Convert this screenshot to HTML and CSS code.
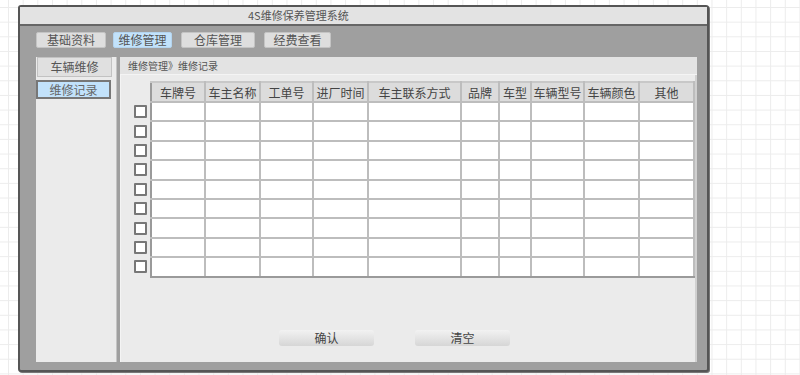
FILE: index.html
```html
<!DOCTYPE html>
<html lang="zh-CN">
<head>
  <meta charset="UTF-8" />
  <meta name="viewport" content="width=device-width, initial-scale=1.0" />
  <title>4S维修保养管理系统</title>
  <link rel="stylesheet" href="styles.css">
</head>
<body>
  <div class="frame">
    <div class="titlebar">4S维修保养管理系统</div>

    <div class="tabs">
      <button class="tab tab-base">基础资料</button>
      <button class="tab tab-repair active">维修管理</button>
      <button class="tab tab-store">仓库管理</button>
      <button class="tab tab-cost">经费查看</button>
    </div>

    <div class="main">
      <div class="sidebar">
        <div class="side-head">车辆维修</div>
        <div class="side-item active">维修记录</div>
      </div>

      <div class="content">
        <div class="crumb">维修管理》维修记录</div>
        <div class="panel">
          <table class="grid">
            <colgroup>
              <col style="width:17px">
              <col style="width:54px">
              <col style="width:55px">
              <col style="width:53px">
              <col style="width:55px">
              <col style="width:93px">
              <col style="width:38px">
              <col style="width:32px">
              <col style="width:53px">
              <col style="width:55px">
              <col style="width:55px">
            </colgroup>
            <thead>
              <tr>
                <th class="check"></th>
                <th>车牌号</th>
                <th>车主名称</th>
                <th>工单号</th>
                <th>进厂时间</th>
                <th>车主联系方式</th>
                <th>品牌</th>
                <th>车型</th>
                <th>车辆型号</th>
                <th>车辆颜色</th>
                <th>其他</th>
              </tr>
            </thead>
            <tbody id="rows"></tbody>
          </table>

          <div class="actions">
            <button class="btn">确认</button>
            <button class="btn">清空</button>
          </div>
        </div>
      </div>
    </div>
  </div>

  <script>
    let rows = document.getElementById("rows");
    for (let i = 0; i < 9; i++) {
      let tr = document.createElement("tr");
      tr.innerHTML = '<td class="check"><span class="box"></span></td>' + '<td></td>'.repeat(10);
      rows.appendChild(tr);
    }
  </script>
</body>
</html>
```

FILE: styles.css
```css
:root {
  --frame: #9f9f9f;
  --frame-border: #555555;
  --bar: #e3e3e3;
  --panel: #ebebeb;
  --text: #444444;
  --select: #c2e2fb;
  --line: #bdbdbd;
}

* {
  margin: 0;
  padding: 0;
  box-sizing: border-box;
  font-family: "Noto Sans CJK SC", "Noto Sans", sans-serif;
}

body {
  background-color: #ffffff;
  background-image:
    linear-gradient(to right, #ececec 1px, transparent 1px),
    linear-gradient(to bottom, #ececec 1px, transparent 1px);
  background-size: 14.67px 14.67px;
  background-position: 8px 7px;
  height: 100vh;
  color: var(--text);
  overflow: hidden;
}

.frame {
  margin: 5px 0 0 18px;
  width: 691px;
  height: 367px;
  border: 2px solid var(--frame-border);
  border-radius: 3px;
  background: var(--frame);
  box-shadow: 1px 1px 0 #777;
  display: flex;
  flex-direction: column;
}

.titlebar {
  height: 19px;
  background: var(--bar);
  border-bottom: 2px solid #666;
  font-size: 11px;
  line-height: 17px;
  padding-left: 228px;
  color: #555;
}

.tabs {
  display: flex;
  padding: 6px 0 0 16px;
}

.tab {
  height: 16px;
  font-size: 12px;
  line-height: 14px;
  color: #555;
  background: #dedede;
  border: 1px solid #c4c4c4;
  border-radius: 2px;
}

.tab-base { width: 70px; margin-right: 7px; }
.tab-repair { width: 59px; margin-right: 9px; }
.tab-store { width: 74px; margin-right: 9px; }
.tab-cost { width: 67px; }

.tab.active {
  background: var(--select);
  border-color: #b4d4ee;
}

.main {
  flex: 1;
  display: flex;
  gap: 3px;
  margin: 9px 10px 8px 16px;
}

.sidebar {
  width: 81px;
  background: var(--panel);
  border-right: 1px solid #c4c4c4;
}

.side-head {
  height: 20px;
  margin: 0 4px 0 1px;
  background: #e0e0e0;
  border: 1px solid #c2c2c2;
  font-size: 12px;
  line-height: 18px;
  text-align: center;
  color: #555;
}

.side-item {
  height: 19px;
  margin: 3px 5px 0 0;
  border: 2px solid #777;
  font-size: 12px;
  line-height: 15px;
  text-align: center;
  color: #666;
}

.side-item.active {
  background: var(--select);
}

.content {
  flex: 1;
  display: flex;
  flex-direction: column;
}

.crumb {
  height: 18px;
  background: var(--bar);
  border-bottom: 1px solid #f4f4f4;
  font-size: 10px;
  line-height: 17px;
  padding-left: 8px;
  color: #555;
}

.panel {
  flex: 1;
  background: var(--panel);
  border-left: 1px solid #f4f4f4;
  border-right: 2px solid #d0d0d0;
  padding: 6px 0 0 13px;
}

.grid {
  border-collapse: collapse;
  table-layout: fixed;
  width: 560px;
}

.grid th,
.grid td {
  border: 2px solid var(--line);
  padding: 0;
}

.grid th {
  height: 20px;
  background: #dcdcdc;
  font-size: 12px;
  font-weight: normal;
  color: var(--text);
  text-align: center;
  border-top-color: #c8c8c8;
}

.grid td {
  height: 19.4px;
  background: #ffffff;
}

.grid th:nth-child(2),
.grid td:nth-child(2) {
  border-left-color: #9a9a9a;
}

.grid tbody tr:last-child td {
  border-bottom-color: #9a9a9a;
}

.grid .check {
  border: none;
  background: transparent;
  vertical-align: middle;
}

.box {
  display: block;
  width: 13px;
  height: 13px;
  border: 2px solid #777;
  border-radius: 1px;
  background: #ffffff;
}

.actions {
  display: flex;
  gap: 41px;
  margin-top: 52px;
  padding-left: 145px;
}

.btn {
  width: 95px;
  height: 16px;
  border: none;
  border-radius: 3px;
  background: linear-gradient(#f2f2f2, #d6d6d6);
  font-size: 12px;
  line-height: 16px;
  color: var(--text);
}
```
